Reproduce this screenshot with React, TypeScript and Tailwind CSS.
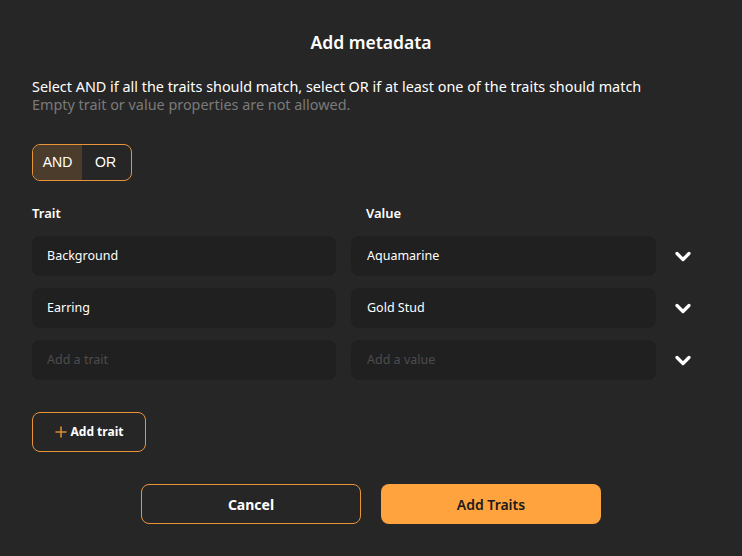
import React from "react";

const Chevron = () => (
  <svg width="16" height="11" viewBox="0 0 16 11" fill="none">
    <path d="M2 2.5 L8 8.5 L14 2.5" stroke="white" strokeWidth="3.2" strokeLinecap="round" strokeLinejoin="round" />
  </svg>
);

const rows = [
  { trait: "Background", value: "Aquamarine" },
  { trait: "Earring", value: "Gold Stud" },
  { trait: "", value: "" },
];

export default function App() {
  return (
    <div
      className="w-[742px] h-[556px] bg-[#262626] text-white px-8 pt-[28px]"
      style={{ fontFamily: '"Noto Sans", sans-serif' }}
    >
      <h1 className="text-center text-[17.5px] font-semibold leading-[28px]">Add metadata</h1>
      <div className="mt-[22px] text-[14.4px] leading-[18px]">
        <p className="text-white">
          Select AND if all the traits should match, select OR if at least one of the traits should match
        </p>
        <p className="text-[#7a7a7a]">Empty trait or value properties are not allowed.</p>
      </div>
      <div
        className="mt-[30px] w-[100px] h-[37px] rounded-[8px] border border-[#e8953a] flex overflow-hidden text-[14px]"
        style={{ fontFamily: '"Liberation Sans", Arial, sans-serif' }}
      >
        <div className="w-[49px] h-full bg-[#4c3c2b] rounded-l-[7px] flex items-center justify-center">AND</div>
        <div className="flex-1 flex items-center justify-center pr-[2px]">OR</div>
      </div>
      <div className="mt-[24px] flex text-[13px] font-semibold leading-[16px]">
        <div className="w-[334px]">Trait</div>
        <div>Value</div>
      </div>
      <div className="mt-[15px] flex flex-col gap-[12px]">
        {rows.map((r, i) => (
          <div key={i} className="flex items-center">
            <div className="w-[304px] h-[40px] rounded-[8px] bg-[#202020] flex items-center pl-[15px] text-[12.5px]">
              {r.trait ? <span>{r.trait}</span> : <span className="text-[#4d4d4d]">Add a trait</span>}
            </div>
            <div className="ml-[15px] w-[305px] h-[40px] rounded-[8px] bg-[#202020] flex items-center pl-[16px] text-[12.5px]">
              {r.value ? <span>{r.value}</span> : <span className="text-[#4d4d4d]">Add a value</span>}
            </div>
            <div className="ml-[19px] flex items-center">
              <Chevron />
            </div>
          </div>
        ))}
      </div>
      <button className="mt-[32px] w-[114px] h-[40px] rounded-[8px] border border-[#e8953a] flex items-center justify-center gap-[4px] text-[12px] font-bold">
        <svg width="12" height="12" viewBox="0 0 12 12">
          <path d="M6 0.5 V11.5 M0.5 6 H11.5" stroke="#d98a3c" strokeWidth="1.6" />
        </svg>
        <span>Add trait</span>
      </button>
      <div className="mt-[32px] flex justify-center gap-[20px]">
        <button className="w-[220px] h-[40px] rounded-[8px] border border-[#e8953a] text-[14px] font-bold flex items-center justify-center">
          Cancel
        </button>
        <button className="w-[220px] h-[40px] rounded-[8px] bg-[#ffa33e] text-[#1a1a1a] text-[14px] font-semibold flex items-center justify-center">
          Add Traits
        </button>
      </div>
    </div>
  );
}
